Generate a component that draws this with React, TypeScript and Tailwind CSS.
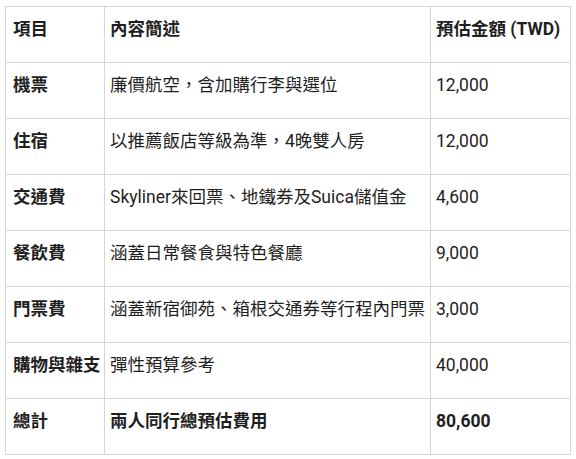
const rows = [
  { item: "機票", desc: "廉價航空，含加購行李與選位", cost: "12,000" },
  { item: "住宿", desc: "以推薦飯店等級為準，4晚雙人房", cost: "12,000" },
  { item: "交通費", desc: "Skyliner來回票、地鐵券及Suica儲值金", cost: "4,600" },
  { item: "餐飲費", desc: "涵蓋日常餐食與特色餐廳", cost: "9,000" },
  { item: "門票費", desc: "涵蓋新宿御苑、箱根交通券等行程內門票", cost: "3,000" },
  { item: "購物與雜支", desc: "彈性預算參考", cost: "40,000" },
];

export default function App() {
  return (
    <div className="w-[576px] h-[459px] bg-white pl-[5px] pt-[6px] text-[#1f1f1f] font-['Roboto','Noto_Sans_CJK_TC',sans-serif] text-[17.5px] leading-[24px]">
      <table className="border-collapse w-[565px] table-fixed">
        <colgroup>
          <col className="w-[99px]" />
          <col className="w-[326px]" />
          <col className="w-[140px]" />
        </colgroup>
        <thead>
          <tr className="h-[56px]">
            <th className="border border-[#d6d6d6] align-top text-left font-bold pt-[10px] px-[7px]">項目</th>
            <th className="border border-[#d6d6d6] align-top text-left font-bold pt-[10px] px-[5px]">內容簡述</th>
            <th className="border border-[#d6d6d6] align-top text-left font-bold pt-[10px] px-[5px] whitespace-nowrap">預估金額 (TWD)</th>
          </tr>
        </thead>
        <tbody>
          {rows.map((r) => (
            <tr key={r.item} className="h-[56px]">
              <td className="border border-[#d6d6d6] align-top font-bold pt-[10px] px-[7px] whitespace-nowrap">{r.item}</td>
              <td className="border border-[#d6d6d6] align-top pt-[10px] px-[5px] whitespace-nowrap">{r.desc}</td>
              <td className="border border-[#d6d6d6] align-top pt-[10px] px-[5px]">{r.cost}</td>
            </tr>
          ))}
          <tr className="h-[56px]">
            <td className="border border-[#d6d6d6] align-top font-bold pt-[10px] px-[7px]">總計</td>
            <td className="border border-[#d6d6d6] align-top font-bold pt-[10px] px-[5px]">兩人同行總預估費用</td>
            <td className="border border-[#d6d6d6] align-top font-bold pt-[10px] px-[5px]">80,600</td>
          </tr>
        </tbody>
      </table>
    </div>
  );
}
